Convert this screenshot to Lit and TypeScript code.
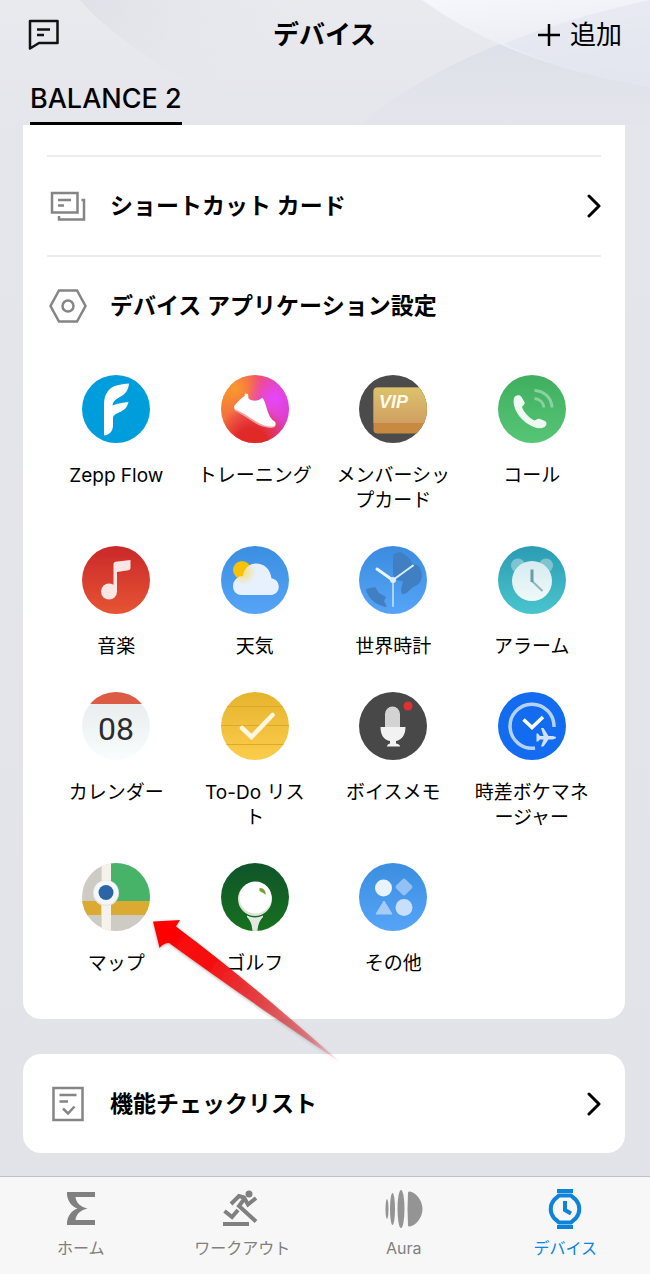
import { LitElement, html, svg, css, nothing, type SVGTemplateResult } from "lit";
import { customElement, property } from "lit/decorators.js";
import { classMap } from "lit/directives/class-map.js";

/* App icons share a 68x68 canvas clipped to a circle by CSS. */
const icons: Record<string, SVGTemplateResult> = {
  flow: svg`
    <rect width="68" height="68" fill="#009ddd"/>
    <path fill="#fff" d="M47 8.500C40 9 33 10 28.500 13.500C23 18 22 24 22 31V60.500C27 60 30.500 57 31 51V43C31.500 36.500 44 39 46.500 27C41 28 36 28 30.500 30.500C32 20 45.500 24.500 47 8.500Z"/>`,
  training: svg`
    <defs>
      <linearGradient id="tr" x1="0" y1="0.350" x2="1" y2="0.450"><stop offset="0" stop-color="#f47b30"/><stop offset="0.500" stop-color="#f0506a"/><stop offset="1" stop-color="#d93cc8"/></linearGradient>
      <radialGradient id="tr2" cx="0.780" cy="0.350" r="0.400"><stop offset="0" stop-color="#e546ff"/><stop offset="1" stop-color="#e546ff" stop-opacity="0"/></radialGradient>
      <radialGradient id="tr3" cx="0.450" cy="1" r="0.550"><stop offset="0" stop-color="#e02a24"/><stop offset="0.400" stop-color="#e02a2a"/><stop offset="1" stop-color="#e02a2a" stop-opacity="0"/></radialGradient>
      <radialGradient id="tr4" cx="0.200" cy="0.200" r="0.400"><stop offset="0" stop-color="#f99a2c"/><stop offset="1" stop-color="#f99a2c" stop-opacity="0"/></radialGradient>
    </defs>
    <rect width="68" height="68" fill="url(#tr)"/><rect width="68" height="68" fill="url(#tr4)"/><rect width="68" height="68" fill="url(#tr2)"/><rect width="68" height="68" fill="url(#tr3)"/>
    <path fill="#f6a0a0" d="M13 33L14 36C22 39 32 48 40 51C46 53 53 54 54.500 51L54 48Z"/>
    <path fill="#fff" d="M13.500 30.500L19 24.500L23.500 21L24 18.500L27 19L27.500 23.500C31 26.500 37 26.500 40 23.500L41.500 23C43.500 25 44 28 45 31C47 38 49 43.500 53 46C55.500 47.500 55 51 52.500 51.500C46 52 41 50 36 47C28 42 22 37.500 14.500 34.500C13 34 12.800 32 13.500 30.500Z"/>`,
  vip: svg`
    <defs><linearGradient id="vp" x1="0" y1="0" x2="0" y2="1"><stop offset="0" stop-color="#dcc26c"/><stop offset="1" stop-color="#d0a062"/></linearGradient></defs>
    <rect width="68" height="68" fill="#4b4b4b"/>
    <rect x="14.500" y="12.500" width="60" height="46" rx="4" fill="#c88a41"/>
    <path d="M14.500 16.500a4 4 0 0 1 4-4H68V48H14.500Z" fill="url(#vp)"/>
    <text class="vip-text" x="20" y="33">VIP</text>`,
  call: svg`
    <defs><linearGradient id="cl" x1="0" y1="0" x2="0" y2="1"><stop offset="0" stop-color="#3fae5e"/><stop offset="1" stop-color="#57c576"/></linearGradient></defs>
    <rect width="68" height="68" fill="url(#cl)"/>
    <path fill="#eef9f1" d="M16.500 22C18.500 19.500 22 19.500 23.500 22L26.500 27C27.500 29 25 30.500 24 32C26 38 31.500 43 36.500 45.500C38.500 45 39.500 43 42 44L47 46C49.500 47.500 48.500 51 46.500 52C42 54.500 36 53 30 49C23.500 45 18.500 38.500 16.500 32C15.500 28.500 15 24.500 16.500 22Z"/>
    <path d="M36.500 23.500C41.500 24 45.500 27.500 46 32.500" fill="none" stroke="#8bd2a0" stroke-width="3"/>
    <path d="M36.500 15.500C46 16 53.500 22.500 54 32.500" fill="none" stroke="#8bd2a0" stroke-width="3"/>`,
  music: svg`
    <defs><linearGradient id="ms" x1="0" y1="0" x2="0" y2="1"><stop offset="0" stop-color="#ca2829"/><stop offset="1" stop-color="#e65434"/></linearGradient></defs>
    <rect width="68" height="68" fill="url(#ms)"/>
    <circle cx="27" cy="45.500" r="8" fill="#fbe6e4"/>
    <path fill="#fbe6e4" d="M31.500 18Q31.500 16 33.500 15.800L48.500 14V22Q48.500 24 46.500 24.200L35 26V46H31.500Z"/>`,
  weather: svg`
    <defs>
      <linearGradient id="wt" x1="0" y1="0" x2="0" y2="1"><stop offset="0" stop-color="#3b8ee0"/><stop offset="1" stop-color="#55a4f7"/></linearGradient>
      <radialGradient id="wh" gradientUnits="userSpaceOnUse" cx="22" cy="26" r="13"><stop offset="0" stop-color="#f9dc76"/><stop offset="1" stop-color="#e7f0fd"/></radialGradient>
    </defs>
    <rect width="68" height="68" fill="url(#wt)"/>
    <circle cx="21" cy="24" r="9" fill="#f7c309"/>
    <path fill="url(#wh)" d="M20.500 49C8.500 48.500 9.500 30.500 22 30C24 12.500 48.500 13.500 50.500 32.500C60 33.500 60.500 48 50 49Z"/>`,
  world: svg`
    <defs><linearGradient id="wd" x1="0" y1="0" x2="0" y2="1"><stop offset="0" stop-color="#3b8ce0"/><stop offset="1" stop-color="#55a4f7"/></linearGradient></defs>
    <rect width="68" height="68" fill="url(#wd)"/>
    <path fill="#3f7fc2" d="M34 9C37 6 42 5 45 8L52 14C52 19 57 18 60 20C65 28 63 36 58 39C51 42 48 49 43 48C40 41 46 37 43 35C37 35 34 32 34 25Z"/>
    <path fill="#3f7fc2" d="M7 43L16 41L20 47L27 51L25 55L28 61C19 60 9 54 7 43Z"/>
    <g stroke-linecap="round" fill="none"><path d="M33.500 34L18 23" stroke="#e9f5ff" stroke-width="3"/><path d="M34 34L54 19.500" stroke="#d7f0fd" stroke-width="2"/><path d="M34 34V60" stroke="#a9d4f8" stroke-width="2"/></g>
    <circle cx="34" cy="34" r="3" fill="#d9effd"/>`,
  alarm: svg`
    <defs>
      <linearGradient id="al" x1="0" y1="0" x2="0" y2="1"><stop offset="0" stop-color="#2c9cb4"/><stop offset="1" stop-color="#49c5cd"/></linearGradient>
      <linearGradient id="al2" x1="0" y1="0" x2="0" y2="1"><stop offset="0" stop-color="#d5ebef"/><stop offset="1" stop-color="#f0f9fa"/></linearGradient>
    </defs>
    <rect width="68" height="68" fill="url(#al)"/>
    <circle cx="20" cy="19.500" r="7" fill="#7fc4d0"/><circle cx="48" cy="19.500" r="7" fill="#7fc4d0"/>
    <circle cx="34" cy="35" r="20" fill="url(#al2)"/>
    <path d="M34 35L44.500 45" stroke="#8eb4bc" stroke-width="2"/><path d="M34 23.500V36" stroke="#6a9ba6" stroke-width="3"/>`,
  calendar: svg`
    <defs><linearGradient id="cd" x1="0" y1="0" x2="0" y2="1"><stop offset="0" stop-color="#e6eaec"/><stop offset="1" stop-color="#f8fdfd"/></linearGradient></defs>
    <rect width="68" height="68" fill="url(#cd)"/><rect width="68" height="12" fill="#dc5b45"/>
    <text class="date-text" x="34" y="48">08</text>`,
  todo: svg`
    <defs><linearGradient id="td" x1="0" y1="0" x2="0" y2="1"><stop offset="0" stop-color="#e6b32d"/><stop offset="1" stop-color="#fbcd4c"/></linearGradient></defs>
    <rect width="68" height="68" fill="url(#td)"/>
    <path d="M0 14.500H68M0 33.500H68M0 52.500H68" stroke="#dda92b"/>
    <path d="M21 36L30.500 45L51.500 23" fill="none" stroke="#fff7df" stroke-width="4.500" stroke-linecap="round"/>`,
  voice: svg`
    <rect width="68" height="68" fill="#484848"/>
    <circle cx="49" cy="14" r="4.500" fill="#df3131"/>
    <path fill="#d3d3d3" d="M26 35V22a7.500 7.500 0 0 1 15 0V35Z"/>
    <path fill="#f2f2f2" d="M21.500 35H46.500C46.500 43 42.500 48 37 49V51.500C40 52 41 53 41 54.500H28C28 53 29 52 31 51.500V49C25 48 21.500 43 21.500 35Z"/>`,
  jetlag: svg`
    <rect width="68" height="68" fill="#136cf0"/>
    <path d="M56 35A22 22 0 1 0 37 56" fill="none" stroke="#b3d2fd" stroke-width="3.500"/>
    <path d="M25.500 27.500L34 35.500L45 25" fill="none" stroke="#fff" stroke-width="3.500"/>
    <path fill="#cfe1fd" d="M58 45.500C58 47 55 47.500 52.500 47.500H50.500L45.500 54.500H43L45.500 47.500H42L40 49.500H38.500V41.500H40L42 44H45.500L43 36H45.500L50.500 44H53C55.500 44 58 44.500 58 45.500Z"/>`,
  map: svg`
    <rect width="68" height="68" fill="#cdcbc3"/>
    <rect x="29" width="39" height="38" fill="#46b368"/>
    <rect y="38" width="68" height="14" fill="#dbaa31"/>
    <rect x="19" width="10" height="68" fill="#f6f1ea"/><path d="M19.500 0V68" stroke="#dedad2"/>
    <circle cx="24" cy="30" r="13" fill="#e3e7ec"/><circle cx="24" cy="29.500" r="12" fill="#f5f8fb"/><circle cx="24" cy="29.500" r="7.500" fill="#2b65a6"/>`,
  golf: svg`
    <defs><linearGradient id="gf" x1="0" y1="0" x2="0" y2="1"><stop offset="0" stop-color="#0f552a"/><stop offset="1" stop-color="#17701f"/></linearGradient></defs>
    <rect width="68" height="68" fill="url(#gf)"/>
    <path fill="#e1e9e1" d="M26 52.500Q34 56.500 42 52.500V54C39 57 37 61 36.500 68H31.500C31 61 29 57 26 54Z"/>
    <circle cx="34" cy="36" r="17" fill="#dce4d6"/><circle cx="34.500" cy="34.500" r="16" fill="#fff"/>
    <path d="M38.500 25C42 24.500 45.500 28 44.500 32C43 30 41 29.500 38.500 28Z" fill="#75a22a"/>`,
  other: svg`
    <defs><linearGradient id="ot" x1="0" y1="0" x2="0" y2="1"><stop offset="0" stop-color="#3b8ee0"/><stop offset="1" stop-color="#55a4f7"/></linearGradient></defs>
    <rect width="68" height="68" fill="url(#ot)"/>
    <circle cx="24.500" cy="25" r="8.500" fill="#e9f3fe"/>
    <rect x="38.500" y="17.500" width="13" height="13" rx="2" transform="rotate(45 45 24)" fill="#93c1f4"/>
    <path d="M25 38L33 51H17Z" fill="#a5cbf6" stroke="#a5cbf6" stroke-linejoin="round"/>
    <circle cx="45" cy="44.500" r="8.500" fill="#c7dffa"/>`,
};

const apps = [
  ["flow", "Zepp Flow"], ["training", "トレーニング"], ["vip", "メンバーシップカード"], ["call", "コール"],
  ["music", "音楽"], ["weather", "天気"], ["world", "世界時計"], ["alarm", "アラーム"],
  ["calendar", "カレンダー"], ["todo", "To-Do リスト"], ["voice", "ボイスメモ"], ["jetlag", "時差ボケマネージャー"],
  ["map", "マップ"], ["golf", "ゴルフ"], ["other", "その他"],
];

const tabs: { label: string; active?: boolean; icon: SVGTemplateResult }[] = [
  { label: "ホーム", icon: svg`<path fill="currentColor" d="M8 6H36V11H16.500C17 17 22 21 28.500 22.500C22 24 17 28 16.500 34H36V39H8V36C9 29 13 24.500 18.500 22.500C13 20.500 9 16 8 9Z"/>` },
  { label: "ワークアウト", icon: svg`
    <g fill="none" stroke="currentColor" stroke-width="4"><path d="M11 18L19 10L24 11.500L28 18.500L36 12M25 12L19 20L36 35.500M4.500 25L12 31L18 24"/></g>
    <circle cx="29" cy="8" r="3.500" fill="currentColor"/><path fill="currentColor" d="M3 36H29V40H3Z"/>` },
  { label: "Aura", icon: svg`<g fill="#949494"><ellipse cx="5" cy="23" rx="1.500" ry="10"/><ellipse cx="10.500" cy="23" rx="2.500" ry="16"/><ellipse cx="19" cy="23" rx="3.500" ry="19"/><path d="M26 7Q26 5 28 5.500C34 7 40.500 14 40.500 23S34 39 28 40.500Q26 41 26 39Q25 23 26 7Z"/></g>` },
  { label: "デバイス", active: true, icon: svg`
    <g fill="none" stroke="currentColor" stroke-width="4"><path d="M16 9.500H28L33 14A14 14 0 0 1 33 32L28 36.500H16L11 32A14 14 0 0 1 11 14Z"/><path d="M22 15V24L28 27.500"/></g>
    <path fill="currentColor" d="M14 3H30V7H14ZM14 39H30V43H14Z"/>` },
];

const chevron = html`<svg class="chevron" viewBox="0 0 14 24" aria-hidden="true"><path d="M2 2L12 12L2 22"/></svg>`;

@customElement("app-tile")
export class AppTile extends LitElement {
  @property() icon = "";
  @property() label = "";

  static styles = css`
    :host { display: block; }
    .tile {
      display: flex; flex-direction: column; align-items: center; gap: 20px;
      width: 100%; padding: 0 12px; border: 0; background: none; color: #000;
      font: 400 19px/25px Inter, "Noto Sans CJK JP", sans-serif;
      word-break: break-all; line-break: anywhere; cursor: pointer;
    }
    .picture { display: block; width: 68px; height: 68px; border-radius: 50%; }
    .vip-text { font: italic 700 18px "Liberation Sans", sans-serif; fill: #fffbe9; }
    .date-text { font: 400 32px Roboto, sans-serif; fill: #2b2d2e; text-anchor: middle; }
  `;

  render() {
    return html`<button class="tile" type="button">
      <svg class="picture" viewBox="0 0 68 68" aria-hidden="true">${icons[this.icon]}</svg>
      <span>${this.label}</span>
    </button>`;
  }
}

@customElement("app-root")
export class AppRoot extends LitElement {
  static styles = css`
    :host {
      display: flex; flex-direction: column; position: relative; min-height: 100vh;
      background: linear-gradient(#e9eaee, #e5e5ec 130px, #e2e3e8);
      color: #000; font-family: Inter, "Noto Sans CJK JP", sans-serif;
    }
    * { box-sizing: border-box; }
    button { border: 0; padding: 0; background: none; color: inherit; font-family: inherit; cursor: pointer; }
    h1, h2 { margin: 0; }
    .backdrop { position: absolute; inset: 0 0 auto; width: 100%; height: 125px; }
    .header {
      position: relative; display: grid; grid-template-columns: 1fr auto 1fr; align-items: center;
      height: 70px; padding: 0 28px 0 27px;
    }
    .header h1 { font-size: 26px; line-height: 36px; font-weight: 600; }
    .feedback { justify-self: start; display: flex; }
    .feedback svg { width: 34px; height: 34px; }
    .add { justify-self: end; display: flex; align-items: center; gap: 10px; font-size: 26px; line-height: 36px; }
    .add svg { width: 22px; height: 22px; }
    .devices { position: relative; display: flex; height: 55px; padding: 0 30px; }
    .device {
      display: flex; align-items: center; padding-top: 6px; border-bottom: 3px solid #000;
      font-size: 27px; line-height: 32px; font-weight: 500;
    }
    .content { position: relative; display: flex; flex-direction: column; gap: 35px; padding: 0 25px 23px 23px; }
    .card { background: #fff; border-radius: 18px; padding: 0 24px; }
    .settings { border-radius: 0 0 18px 18px; padding-top: 30px; padding-bottom: 43px; }
    .row {
      display: flex; align-items: center; width: 100%; height: 99px; gap: 21px; text-align: left;
    }
    .divided { height: 100px; border-top: 2px solid #ececec; }
    .row .glyph { width: 42px; height: 42px; fill: none; stroke: #858585; stroke-width: 2.5; }
    .row .name { flex: 1; font-size: 23px; line-height: 32px; font-weight: 600; }
    .chevron { width: 14px; height: 24px; fill: none; stroke: #000; stroke-width: 3; stroke-linecap: round; stroke-linejoin: round; }
    .apps { display: grid; grid-template-columns: repeat(4, 1fr); row-gap: 33px; padding-top: 20px; }
    .cell { position: relative; }
    .arrow { position: absolute; z-index: 1; left: 102px; top: 52px; width: 196px; height: 152px; pointer-events: none; }
    .tabs {
      position: relative; display: grid; grid-template-columns: repeat(4, 1fr); flex: 1;
      min-height: 98px; padding-right: 4px; background: #f7f7f8; border-top: 1px solid #bfc0c6;
    }
    .tab {
      display: flex; flex-direction: column; align-items: center; gap: 4px; padding-top: 9px;
      color: #808080; font-size: 16px; line-height: 24px; text-decoration: none;
    }
    .tab svg { width: 44px; height: 46px; }
    .tab.active { color: #0d84da; }
  `;

  render() {
    return html`
      <svg class="backdrop" viewBox="0 0 650 125" preserveAspectRatio="none" aria-hidden="true">
        <defs>
          <linearGradient id="lens" x1="0" y1="0" x2="0.300" y2="1"><stop offset="0" stop-color="#f6f7fb"/><stop offset="1" stop-color="#e5e8f1"/></linearGradient>
          <linearGradient id="hill" x1="0.500" y1="0" x2="0.500" y2="1"><stop offset="0" stop-color="#dbdee8"/><stop offset="1" stop-color="#e4e5ec"/></linearGradient>
          <linearGradient id="left" x1="0" y1="0" x2="1" y2="0.200"><stop offset="0" stop-color="#dfe1e8"/><stop offset="0.700" stop-color="#e8e9ed" stop-opacity="0"/></linearGradient>
        </defs>
        <path d="M80 0Q115 42 205 90L420 125V0Z" fill="url(#left)"/>
        <path d="M360 125Q460 40 650 0V125Z" fill="url(#hill)"/>
        <path d="M422 0Q510 64 650 87V0Z" fill="url(#lens)"/>
        <path d="M504 44Q560 20 650 0V87Q570 74 504 44Z" fill="#e2e5ef" opacity="0.600"/>
      </svg>
      <header class="header">
        <button class="feedback" type="button" aria-label="フィードバック">
          <svg viewBox="0 0 34 34" fill="none" stroke="#111" stroke-width="2.500" stroke-linejoin="round" aria-hidden="true">
            <path d="M3 3H30.500V25H12L3 30.500Z"/><path d="M10 11.500H23M10 17H17"/>
          </svg>
        </button>
        <h1>デバイス</h1>
        <button class="add" type="button">
          <svg viewBox="0 0 22 22" stroke="#000" stroke-width="2.500" aria-hidden="true"><path d="M11 0V22M0 11H22"/></svg>追加
        </button>
      </header>
      <div class="devices"><button class="device" type="button">BALANCE 2</button></div>
      <main class="content">
        <section class="card settings">
          <button class="row divided" type="button">
            <svg class="glyph" viewBox="0 0 42 42" aria-hidden="true"><path d="M5 8H30.500V27.500H5ZM11 15H24M11 20.500H17M34.500 15H37V34.500H12V31"/></svg>
            <span class="name">ショートカット カード</span>${chevron}
          </button>
          <div class="row divided">
            <svg class="glyph" viewBox="0 0 42 42" aria-hidden="true"><path d="M12 5.500H30L38.500 21L30 36.500H12L3.500 21Z"/><circle cx="21" cy="21" r="5.500"/></svg>
            <h2 class="name">デバイス アプリケーション設定</h2>
          </div>
          <div class="apps">
            ${apps.map(([icon, label]) => html`<div class="cell">
              <app-tile icon=${icon} label=${label}></app-tile>
              ${icon === "map" ? this.arrow() : nothing}
            </div>`)}
          </div>
        </section>
        <section class="card">
          <button class="row" type="button">
            <svg class="glyph" viewBox="0 0 42 42" aria-hidden="true"><path d="M6.500 5H35.500V37H6.500ZM12.500 12H29.500M12.500 18.500H21M16 25.500L21 30.500L27.500 23.500"/></svg>
            <span class="name">機能チェックリスト</span>${chevron}
          </button>
        </section>
      </main>
      <nav class="tabs">
        ${tabs.map((tab) => html`<a href="#" class=${classMap({ tab: true, active: !!tab.active })}>
          <svg viewBox="0 0 44 46" aria-hidden="true">${tab.icon}</svg><span>${tab.label}</span>
        </a>`)}
      </nav>
    `;
  }

  private arrow() {
    return html`<svg class="arrow" viewBox="0 0 196 152" aria-hidden="true">
      <defs>
        <linearGradient id="fade" gradientUnits="userSpaceOnUse" x1="4" y1="8" x2="191" y2="147">
          <stop offset="0" stop-color="#ff0000"/><stop offset="0.300" stop-color="#f50e10"/><stop offset="0.600" stop-color="#e23438" stop-opacity="0.850"/>
          <stop offset="0.850" stop-color="#d8444a" stop-opacity="0.550"/><stop offset="1" stop-color="#e0888e" stop-opacity="0.150"/>
        </linearGradient>
        <filter id="shade" x="-10%" y="-10%" width="120%" height="120%"><feDropShadow dx="0" dy="1" stdDeviation="1.500" flood-color="#444" flood-opacity="0.450"/></filter>
      </defs>
      <path filter="url(#shade)" fill="url(#fade)" d="M4 6.500L31 5L27 11.500Q100 66 191 147Q100 86 20 28Q15 28 10.500 33Z"/>
    </svg>`;
  }
}
